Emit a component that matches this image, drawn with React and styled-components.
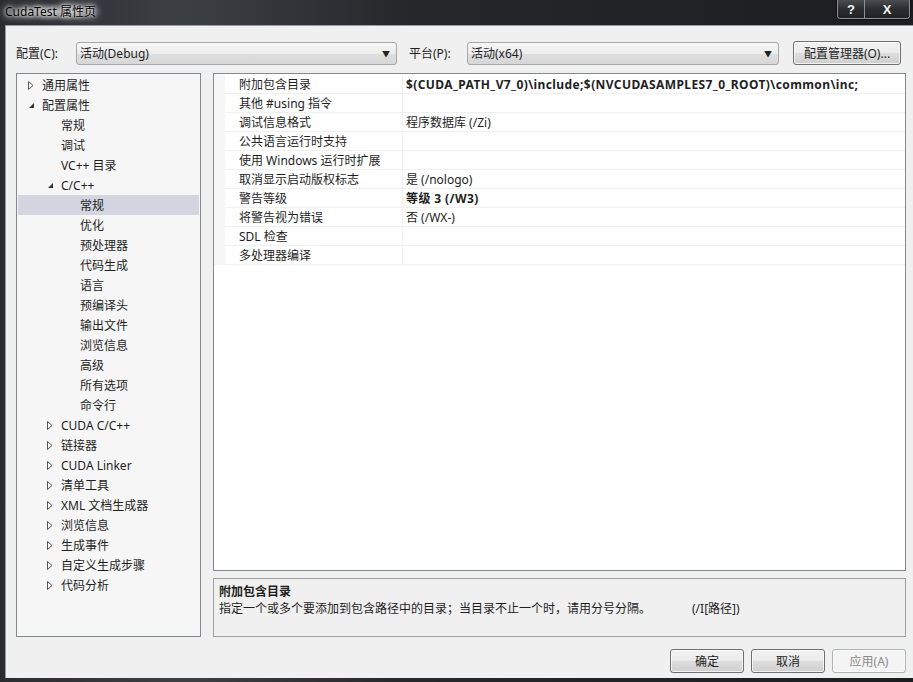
import React from "react";
import styled, { createGlobalStyle } from "styled-components";

const GlobalStyle = createGlobalStyle`
  html, body { margin: 0; padding: 0; background: #1d1f22; }
  * { box-sizing: border-box; }
`;

const FONT = `"Segoe UI", "Noto Sans", "Noto Sans CJK SC", sans-serif`;

const Window = styled.div`
  width: 913px;
  height: 682px;
  display: flex;
  flex-direction: column;
  background: linear-gradient(90deg, #2a2c30 0%, #3c3f44 20%, #25272b 45%, #1b1d20 100%);
  font-family: ${FONT};
  font-size: 12px;
  color: #1e1e1e;
  overflow: hidden;
`;

const TitleBar = styled.div`
  height: 25px;
  display: flex;
  align-items: flex-start;
  justify-content: space-between;
  padding-left: 5px;
`;

const Title = styled.div`
  margin-top: 3px;
  font-size: 12px;
  color: #000;
  text-shadow: 0 0 6px #fff, 0 0 10px #fff, 0 0 3px #eee;
  background: radial-gradient(ellipse at center, rgba(230,230,230,0.55) 0%, rgba(230,230,230,0) 70%);
  padding: 0 10px 0 0;
  line-height: 18px;
`;

const CaptionGroup = styled.div`
  display: flex;
  margin-right: 3px;
  border: 1px solid #8c8f94;
  border-top: none;
  border-radius: 0 0 4px 4px;
  overflow: hidden;
  box-shadow: 0 0 0 1px rgba(0,0,0,0.5);
`;

const CaptionButton = styled.div`
  width: ${p => p.$w}px;
  height: 18px;
  display: flex;
  align-items: center;
  justify-content: center;
  color: #f4f4f4;
  font-weight: bold;
  font-family: "Liberation Sans", sans-serif;
  font-size: 13px;
  background: linear-gradient(#4a4d52, #2b2d31 50%, #202226);
  & + & { border-left: 1px solid #8c8f94; }
`;

const Client = styled.div`
  flex: 1;
  margin: 0 0 4px 5px;
  background: #f0f0f0;
  border-top: 1px solid #9a9ca0;
  border-left: 1px solid #9a9ca0;
  padding: 15px 7px 0 10px;
  display: flex;
  flex-direction: column;
`;

const TopRow = styled.div`
  display: flex;
  align-items: center;
  height: 24px;
`;

const Label = styled.span`
  width: ${p => p.$w}px;
  flex: none;
`;

const Select = styled.div`
  width: ${p => p.$w}px;
  height: 23px;
  flex: none;
  display: flex;
  align-items: center;
  justify-content: space-between;
  padding: 0 6px 0 3px;
  border: 1px solid #a7a7a7;
  border-radius: 3px;
  background: linear-gradient(#f7f7f7, #ececec 50%, #dedede 51%, #d7d7d7);
  margin-right: ${p => p.$mr || 0}px;
`;

const Arrow = styled.span`
  font-size: 8px;
  color: #222;
`;

const Button = styled.div`
  width: ${p => p.$w}px;
  height: 24px;
  flex: none;
  display: flex;
  align-items: center;
  justify-content: center;
  border: 1px solid ${p => (p.$disabled ? "#adb2b5" : "#707070")};
  border-radius: 3px;
  color: ${p => (p.$disabled ? "#8b8b8b" : "#1e1e1e")};
  background: ${p =>
    p.$disabled
      ? "#f4f4f4"
      : "linear-gradient(#f2f2f2, #ebebeb 50%, #dddddd 51%, #cfcfcf)"};
  box-shadow: inset 0 0 0 1px rgba(255,255,255,0.7);
`;

const Main = styled.div`
  display: flex;
  margin-top: 8px;
  height: 564px;
  gap: 12px;
`;

const Tree = styled.div`
  width: 185px;
  flex: none;
  border: 1px solid #828790;
  background: #f6f6f6;
  padding: 1px 1px;
`;

const TreeRow = styled.div`
  height: 20px;
  display: flex;
  align-items: center;
  padding-left: ${p => p.$indent}px;
  background: ${p => (p.$selected ? "#d4d5e0" : "transparent")};
`;

const Toggle = styled.span`
  width: 14px;
  flex: none;
  display: flex;
  align-items: center;
  visibility: ${p => (p.$hidden ? "hidden" : "visible")};
`;

const RightCol = styled.div`
  flex: 1;
  display: flex;
  flex-direction: column;
  gap: 7px;
`;

const Grid = styled.div`
  height: 498px;
  border: 1px solid #828790;
  background: #fff;
  padding-top: 1px;
`;

const GridRow = styled.div`
  height: 19px;
  display: flex;
  align-items: center;
`;

const Gutter = styled.div`
  width: 11px;
  height: 100%;
  background: #f7f7f7;
  flex: none;
`;

const Cell = styled.div`
  height: 100%;
  display: flex;
  align-items: center;
  border-bottom: 1px solid #f0f0f0;
  white-space: nowrap;
  font-weight: ${p => (p.$bold ? "bold" : "normal")};
  letter-spacing: ${p => (p.$bold ? "0.4px" : "0")};
  ${p => (p.$label ? "width: 178px; flex: none; padding-left: 14px; border-right: 1px solid #f0f0f0;" : "flex: 1; padding-left: 3px;")}
`;

const Desc = styled.div`
  flex: 1;
  border: 1px solid #a0a0a0;
  background: #f0f0f0;
  padding: 4px 5px;
  line-height: 17px;
`;

const DescTitle = styled.div`
  font-weight: bold;
`;

const DescText = styled.div`
  display: flex;
  gap: 41px;
`;

const Footer = styled.div`
  display: flex;
  justify-content: flex-end;
  gap: 7px;
  margin-top: 12px;
`;

const Collapsed = () => (
  <svg width="6" height="9" viewBox="0 0 6 9">
    <polygon points="0.5,0.5 5,4.5 0.5,8.5" fill="#fff" stroke="#555" />
  </svg>
);

const Expanded = () => (
  <svg width="7" height="7" viewBox="0 0 7 7">
    <polygon points="6,1 6,6 1,6" fill="#333" />
  </svg>
);

const treeItems = [
  { t: "通用属性", lv: 0, tog: "c" },
  { t: "配置属性", lv: 0, tog: "e" },
  { t: "常规", lv: 1 },
  { t: "调试", lv: 1 },
  { t: "VC++ 目录", lv: 1 },
  { t: "C/C++", lv: 1, tog: "e" },
  { t: "常规", lv: 2, sel: true },
  { t: "优化", lv: 2 },
  { t: "预处理器", lv: 2 },
  { t: "代码生成", lv: 2 },
  { t: "语言", lv: 2 },
  { t: "预编译头", lv: 2 },
  { t: "输出文件", lv: 2 },
  { t: "浏览信息", lv: 2 },
  { t: "高级", lv: 2 },
  { t: "所有选项", lv: 2 },
  { t: "命令行", lv: 2 },
  { t: "CUDA C/C++", lv: 1, tog: "c" },
  { t: "链接器", lv: 1, tog: "c" },
  { t: "CUDA Linker", lv: 1, tog: "c" },
  { t: "清单工具", lv: 1, tog: "c" },
  { t: "XML 文档生成器", lv: 1, tog: "c" },
  { t: "浏览信息", lv: 1, tog: "c" },
  { t: "生成事件", lv: 1, tog: "c" },
  { t: "自定义生成步骤", lv: 1, tog: "c" },
  { t: "代码分析", lv: 1, tog: "c" },
];

const props = [
  ["附加包含目录", "$(CUDA_PATH_V7_0)\\include;$(NVCUDASAMPLES7_0_ROOT)\\common\\inc;", true],
  ["其他 #using 指令", ""],
  ["调试信息格式", "程序数据库 (/Zi)"],
  ["公共语言运行时支持", ""],
  ["使用 Windows 运行时扩展", ""],
  ["取消显示启动版权标志", "是 (/nologo)"],
  ["警告等级", "等级 3 (/W3)", true],
  ["将警告视为错误", "否 (/WX-)"],
  ["SDL 检查", ""],
  ["多处理器编译", ""],
];

export default function App() {
  return (
    <Window>
      <GlobalStyle />
      <TitleBar>
        <Title>CudaTest 属性页</Title>
        <CaptionGroup>
          <CaptionButton $w={26}>?</CaptionButton>
          <CaptionButton $w={45}>X</CaptionButton>
        </CaptionGroup>
      </TitleBar>
      <Client>
        <TopRow>
          <Label $w={60}>配置(C):</Label>
          <Select $w={321} $mr={12}>
            <span>活动(Debug)</span>
            <Arrow>▼</Arrow>
          </Select>
          <Label $w={58}>平台(P):</Label>
          <Select $w={312} $mr={14}>
            <span>活动(x64)</span>
            <Arrow>▼</Arrow>
          </Select>
          <Button $w={108}>配置管理器(O)...</Button>
        </TopRow>
        <Main>
          <Tree>
            {treeItems.map((it, i) => (
              <TreeRow key={i} $indent={[10, 29, 48][it.lv]} $selected={it.sel}>
                <Toggle $hidden={!it.tog}>
                  {it.tog === "e" ? <Expanded /> : <Collapsed />}
                </Toggle>
                <span>{it.t}</span>
              </TreeRow>
            ))}
          </Tree>
          <RightCol>
            <Grid>
              {props.map(([k, v, b], i) => (
                <GridRow key={i}>
                  <Gutter />
                  <Cell $label>{k}</Cell>
                  <Cell $bold={b}>{v}</Cell>
                </GridRow>
              ))}
            </Grid>
            <Desc>
              <DescTitle>附加包含目录</DescTitle>
              <DescText>
                <span>指定一个或多个要添加到包含路径中的目录；当目录不止一个时，请用分号分隔。</span>
                <span>(/I[路径])</span>
              </DescText>
            </Desc>
          </RightCol>
        </Main>
        <Footer>
          <Button $w={74}>确定</Button>
          <Button $w={74}>取消</Button>
          <Button $w={74} $disabled>应用(A)</Button>
        </Footer>
      </Client>
    </Window>
  );
}
